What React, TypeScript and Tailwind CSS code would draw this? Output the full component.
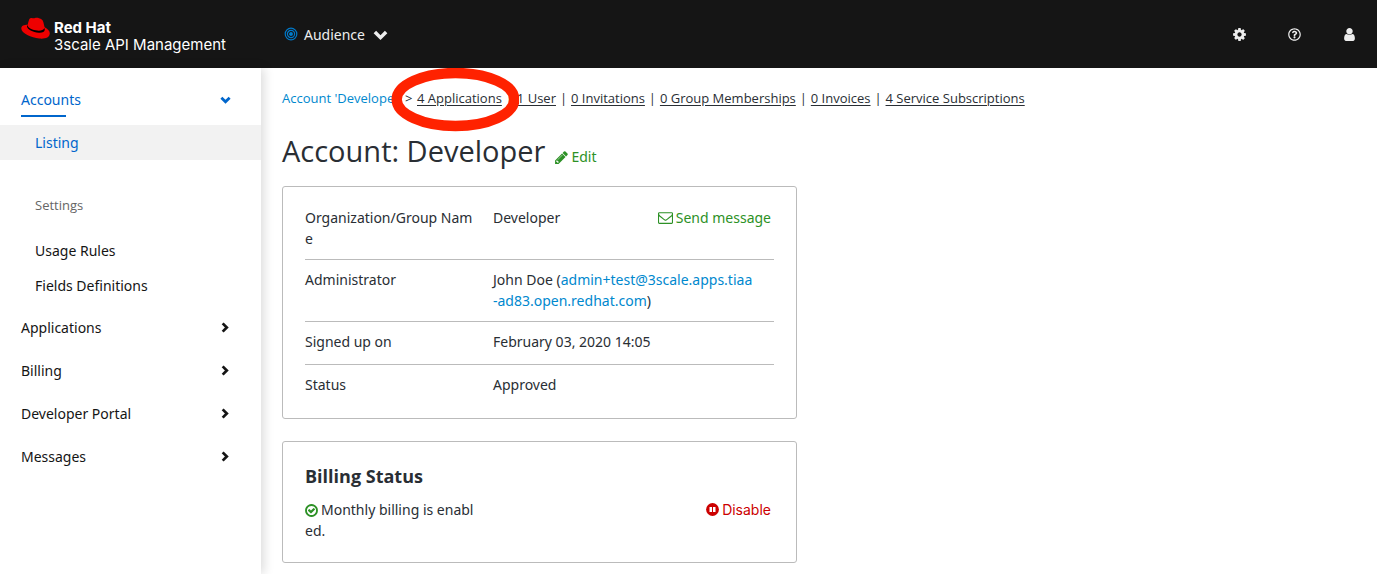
import type { ReactNode } from "react";
import { FaRegQuestionCircle } from "react-icons/fa";

type GlyphProps = { path: string; className?: string; viewBox?: string };

function Glyph({ path, className = "", viewBox = "0 0 1792 1792" }: GlyphProps) {
  return (
    <svg viewBox={viewBox} fill="currentColor" aria-hidden="true" className={className}>
      <path d={path} />
    </svg>
  );
}

const COG =
  "M1152 896q0-106-75-181t-181-75-181 75-75 181 75 181 181 75 181-75 75-181zm512-109v222q0 12-8 23t-20 13l-185 28q-19 54-39 91 35 50 107 138 10 12 10 25t-9 23q-27 37-99 108t-94 71q-12 0-26-9l-138-108q-44 23-91 38-16 136-29 186-7 28-36 28h-222q-14 0-24.5-8.5t-11.5-21.5l-28-184q-49-16-90-37l-141 107q-10 9-25 9-14 0-25-11-126-114-165-168-7-10-7-23 0-12 8-23 15-21 51-66.5t54-70.5q-27-50-41-99l-183-27q-13-2-21-12.5t-8-23.5v-222q0-12 8-23t19-13l186-28q14-46 39-92-40-57-107-138-10-12-10-24 0-10 9-23 26-36 98.5-107.5t94.5-71.5q13 0 26 10l138 107q44-23 91-38 16-136 29-186 7-28 36-28h222q14 0 24.5 8.5t11.5 21.5l28 184q49 16 90 37l142-107q9-9 24-9 13 0 25 10 129 119 165 170 7 8 7 22 0 12-8 23-15 21-51 66.5t-54 70.5q26 50 41 98l183 28q13 2 21 12.5t8 23.5z";
const USER =
  "M1536 1399q0 109-62.5 187t-150.5 78h-854q-88 0-150.5-78t-62.5-187q0-85 8.5-160.5t31.5-152 58.5-131 94-89 134.5-34.5q131 128 313 128t313-128q76 0 134.5 34.5t94 89 58.5 131 31.5 152 8.5 160.5zm-256-887q0 159-112.5 271.5t-271.5 112.5-271.5-112.5-112.5-271.5 112.5-271.5 271.5-112.5 271.5 112.5 112.5 271.5z";
const PENCIL =
  "M491 1536l91-91-235-235-91 91v107h128v128h107zm523-928q0-22-22-22-10 0-17 7l-542 542q-7 7-7 17 0 22 22 22 10 0 17-7l542-542q7-7 7-17zm-54-192l416 416-832 832h-416v-416zm683 96q0 53-37 90l-166 166-416-416 166-165q36-38 90-38 53 0 91 38l235 234q37 39 37 91z";
const ENVELOPE =
  "M1664 1504v-768q-32 36-69 66-268 206-426 338-51 43-83 67t-86.5 48.5-102.5 24.5h-2q-48 0-102.5-24.5t-86.5-48.5-83-67q-158-132-426-338-37-30-69-66v768q0 13 9.5 22.5t22.5 9.5h1472q13 0 22.5-9.5t9.5-22.5zm0-1051v-24.5l-.5-13-3-12.5-5.5-9-9-7.5-14-2.5h-1472q-13 0-22.5 9.5t-9.5 22.5q0 168 147 284 193 152 401 317 6 5 35 29.5t46 37.5 44.5 31.5 50.5 27.5 43 9h2q20 0 43-9t50.5-27.5 44.5-31.5 46-37.5 35-29.5q208-165 401-317 54-43 100.5-115.5t46.5-131.5zm128-37v1088q0 66-47 113t-113 47h-1472q-66 0-113-47t-47-113v-1088q0-66 47-113t113-47h1472q66 0 113 47t47 113z";
const CHECK =
  "M1299 813l-422 422q-19 19-45 19t-45-19l-294-294q-19-19-19-45t19-45l102-102q19-19 45-19t45 19l147 147 275-275q19-19 45-19t45 19l102 102q19 19 19 45t-19 45zm141 83q0-148-73-273t-198-198-273-73-273 73-198 198-73 273 73 273 198 198 273 73 273-73 198-198 73-273zm224 0q0 209-103 385.5t-279.5 279.5-385.5 103-385.5-103-279.5-279.5-103-385.5 103-385.5 279.5-279.5 385.5-103 385.5 103 279.5 279.5 103 385.5z";

function Chevron({ className = "", width = 3 }: { className?: string; width?: number }) {
  return (
    <svg viewBox="0 0 12 12" fill="none" stroke="currentColor" strokeWidth={width} aria-hidden="true" className={className}>
      <path d="M4 1.500 8.500 6 4 10.500" />
    </svg>
  );
}

function Logo() {
  return (
    <a href="#home" className="flex w-[262px] pt-[17px] pl-[21px] text-white">
      <svg viewBox="0 0 29 23" aria-hidden="true" className="h-[23px] w-[29px]">
        <path
          d="M7.600 4.200C8.300 1.800 8.800.9 10.500 1c1.400.1 2.200.5 3.500.1 1.500-.5 2.600-.4 4 .1 2.300.7 3.700 1.600 4.300 3.700l1.300 5.300c3 1.500 5.200 3.500 5.200 6 0 4.400-5.200 5.900-10.500 5.300C10.400 20.600.3 16.200.3 11.500c0-2.800 2.700-3.700 6.300-3.700z"
          fill="#e00"
        />
        <path d="M6.700 7.600c-.6 1.900 1.400 3.700 4.700 4.900 4.500 1.600 10.700 2 12-1.500l.4 1.600c0 2.500-2.700 3.300-6 3.100-5.700-.3-12-3.600-11.800-6.500z" fill="#000" />
      </svg>
      <span className="ml-1 flex flex-col pt-[2px] font-['Inter',sans-serif] text-[15px] leading-[17px]">
        <span className="font-bold">Red Hat</span>
        <span>3scale API Management</span>
      </span>
    </a>
  );
}

function Header() {
  return (
    <header className="flex h-[68px] bg-[#151515] text-[#ededed]">
      <Logo />
      <button type="button" className="flex items-center pl-[22px] text-[14px]">
        <svg viewBox="0 0 14 14" fill="none" stroke="#0078c8" strokeWidth="1.200" aria-hidden="true" className="mr-[6px] size-[14px]">
          <circle cx="7" cy="7" r="5.800" />
          <circle cx="7" cy="7" r="3.600" />
          <circle cx="7" cy="7" r="1.300" fill="#0088ce" />
        </svg>
        Audience
        <Chevron className="ml-2 size-[15px] rotate-90" width={2.800} />
      </button>
      <div className="ml-auto flex items-center gap-[41px] pr-5">
        <button type="button" aria-label="Settings"><Glyph path={COG} className="size-[15px]" /></button>
        <button type="button" aria-label="Help"><FaRegQuestionCircle className="size-[13px]" /></button>
        <button type="button" aria-label="User"><Glyph path={USER} className="size-[15px]" /></button>
      </div>
    </header>
  );
}

function Section({ label }: { label: string }) {
  return (
    <button type="button" className="flex h-[43px] items-center justify-between pr-[31px] pl-[21px]">
      {label}
      <Chevron className="size-[11px]" />
    </button>
  );
}

function Sidebar() {
  return (
    <nav className="z-10 flex w-[261px] shrink-0 flex-col bg-white pt-[10px] text-[14px] text-[#151515] shadow-[3px_0_10px_rgba(0,0,0,0.14)]">
      <button type="button" className="relative flex h-[43px] items-center justify-between pr-[30px] pl-[21px] text-[#06c]">
        Accounts
        <Chevron className="size-[11px] rotate-90" />
        <span className="absolute bottom-1 left-[21px] h-[2px] w-[45px] bg-[#06c]" />
      </button>
      <a href="#listing" className="mt-1 flex h-[35px] items-center bg-[#f2f2f2] pl-[35px] text-[#06c]">Listing</a>
      <h2 className="mt-8 flex h-[27px] items-center pl-[35px] font-['Open_Sans',sans-serif] text-[13px] text-[#666]">Settings</h2>
      <a href="#usage-rules" className="mt-[14px] flex h-[35px] items-center pl-[35px]">Usage Rules</a>
      <a href="#fields" className="mb-[3px] flex h-[35px] items-center pl-[35px]">Fields Definitions</a>
      <Section label="Applications" />
      <Section label="Billing" />
      <Section label="Developer Portal" />
      <Section label="Messages" />
    </nav>
  );
}

function Breadcrumb() {
  const links = ["1 User", "0 Invitations", "0 Group Memberships", "0 Invoices", "4 Service Subscriptions"];
  return (
    <div className="flex font-['Open_Sans',sans-serif] text-[13px] leading-[17px] whitespace-nowrap">
      <a href="#account" className="w-[123px] text-[#0088ce]">Account 'Developer'</a>
      <span className="w-3">&gt;</span>
      <span className="relative">
        <a href="#applications" className="underline underline-offset-2">4 Applications</a>
        <svg viewBox="0 0 128 64" fill="none" aria-hidden="true" className="pointer-events-none absolute -top-[22px] -left-[26px] z-10 h-16 w-32 max-w-none">
          <ellipse cx="64.500" cy="31.500" rx="58.800" ry="26.500" stroke="#ff2200" strokeWidth="10.400" />
        </svg>
      </span>
      {links.map((link) => (
        <span key={link} className="flex">
          <span className="w-[15px] text-center">|</span>
          <a href="#section" className="underline underline-offset-2">{link}</a>
        </span>
      ))}
    </div>
  );
}

function Row({ label, children }: { label: string; children: ReactNode }) {
  return (
    <div className="flex min-h-[43px] border-b border-[#bbb] pt-[9px] pb-[10px] last:border-b-0">
      <dt className="mr-4 w-[172px] shrink-0 break-all">{label}</dt>
      <dd className="flex flex-1 items-start justify-between">{children}</dd>
    </div>
  );
}

export default function App() {
  return (
    <div className="flex min-h-screen flex-col bg-white font-['Noto_Sans','Open_Sans',sans-serif] text-[#292e34]">
      <Header />
      <div className="flex flex-1">
        <Sidebar />
        <main className="min-w-0 flex-1 pt-[22px] pl-[21px]">
          <Breadcrumb />
          <div className="mt-6 flex items-baseline">
            <h1 className="font-['Open_Sans',sans-serif] text-[29px] leading-[40px]">Account: Developer</h1>
            <a href="#edit" className="ml-[9px] text-[14px] leading-[21px] text-[#2d9126]">
              <Glyph path={PENCIL} className="mr-[2px] inline size-[15px] align-[-3px]" />
              Edit
            </a>
          </div>
          <section className="mt-[15px] w-[515px] rounded-[3px] border border-[#bbb] px-[22px] pt-[11px] pb-[10px] text-[14px] leading-[21px]">
            <dl>
              <Row label="Organization/Group Name">
                Developer
                <a href="#message" className="mr-[3px] flex items-center text-[#2d9126]">
                  <Glyph path={ENVELOPE} className="mr-[3px] size-[15px]" />
                  Send message
                </a>
              </Row>
              <Row label="Administrator">
                <span className="w-[263px] break-all">
                  John Doe (<a href="mailto:admin+test@3scale.apps.tiaa-ad83.open.redhat.com" className="text-[#0088ce]">admin+test@3scale.apps.tiaa<wbr />-ad83.open.redhat.com</a>)
                </span>
              </Row>
              <Row label="Signed up on">February 03, 2020 14:05</Row>
              <Row label="Status">Approved</Row>
            </dl>
          </section>
          <section className="mt-[22px] w-[515px] rounded-[3px] border border-[#bbb] px-[22px] pt-[22px] pb-[21px] text-[14px] leading-[21px]">
            <h2 className="font-['Open_Sans',sans-serif] text-[18px] leading-6 font-bold">Billing Status</h2>
            <div className="mt-[11px] flex items-start justify-between pr-[3px]">
              <p className="w-[172px] break-all">
                <Glyph path={CHECK} className="-ml-px mr-[2px] inline size-[15px] align-[-3px] text-[#2d9126]" />
                Monthly billing is enabled.
              </p>
              <button type="button" className="flex items-center font-['Inter',sans-serif] text-[#c00]">
                <svg viewBox="0 0 13 13" aria-hidden="true" className="mr-[3px] size-[13px]">
                  <circle cx="6.500" cy="6.500" r="6.400" fill="currentColor" />
                  <path d="M3.500 4h2.500v5H3.500zM7 4h2.500v5H7z" fill="#fff" />
                </svg>
                Disable
              </button>
            </div>
          </section>
        </main>
      </div>
    </div>
  );
}
